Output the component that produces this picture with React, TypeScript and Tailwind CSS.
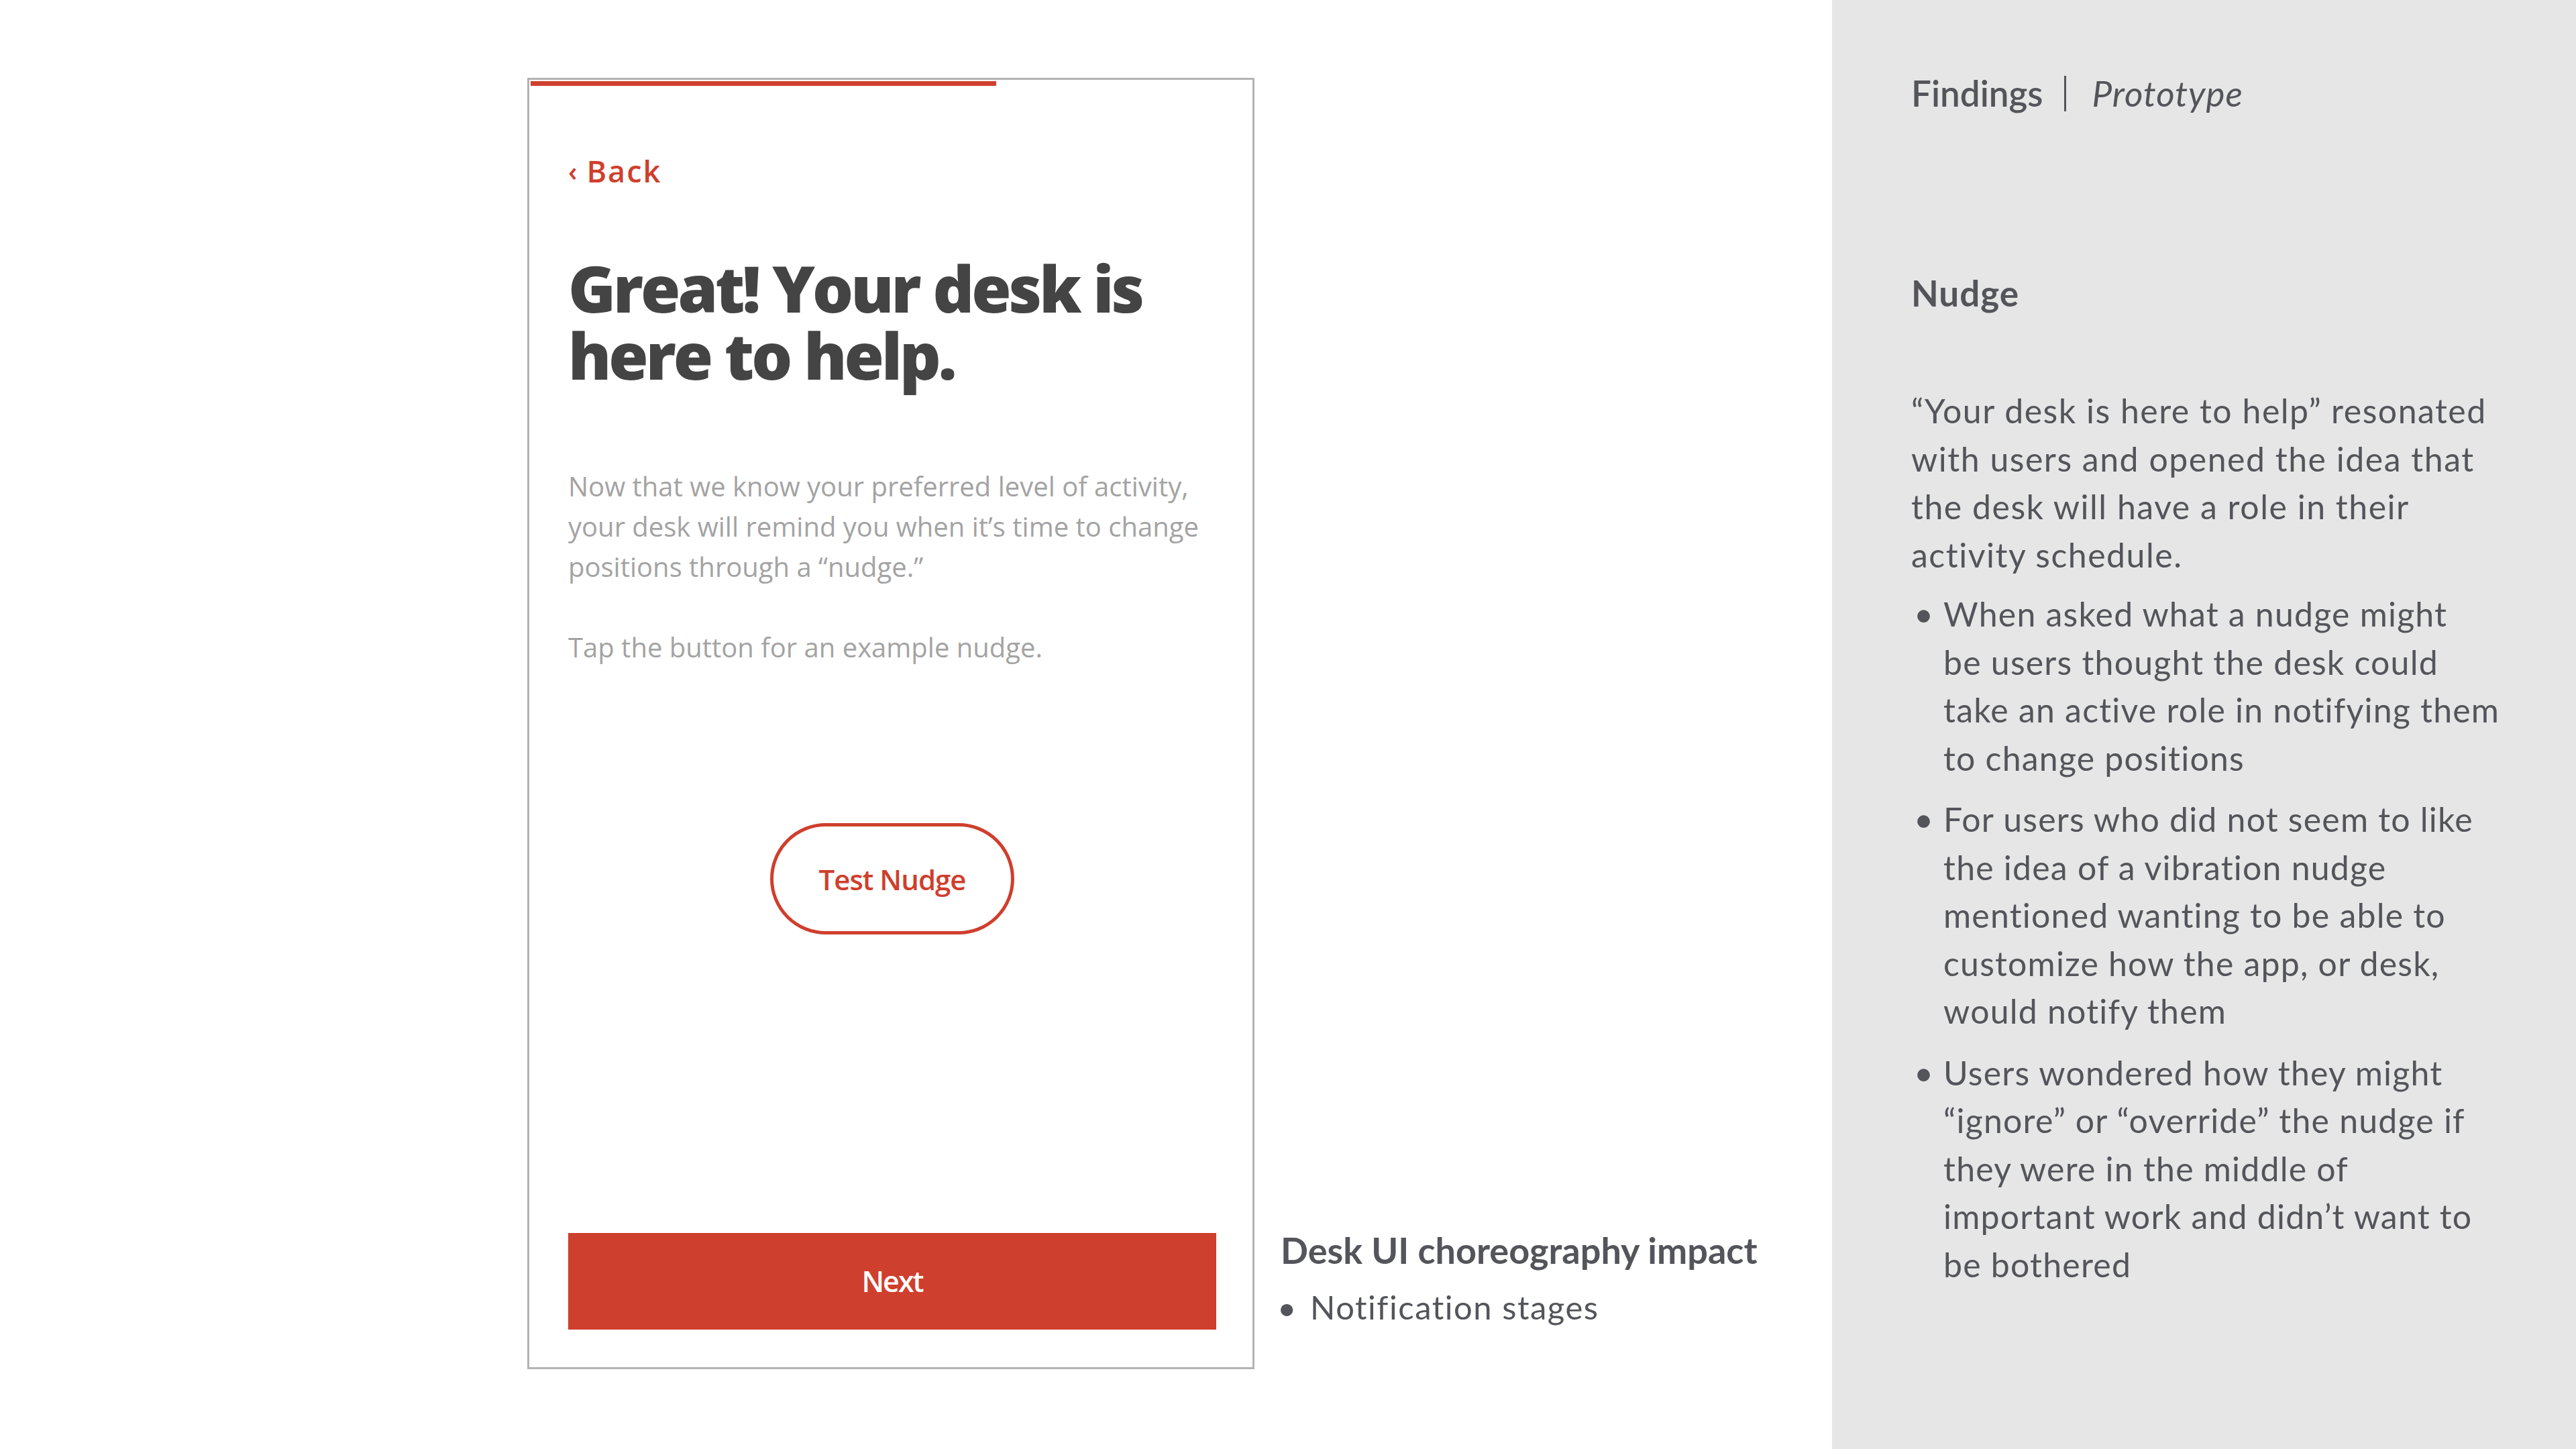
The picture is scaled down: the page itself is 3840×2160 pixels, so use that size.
import React from "react";

const phoneFont = { fontFamily: '"Open Sans", "Liberation Sans", sans-serif' };
const slideFont = { fontFamily: 'Lato, "Noto Sans", sans-serif' };

const nudgeNotes = [
  ["When asked what a nudge might", "be users thought the desk could", "take an active role in notifying them", "to change positions"],
  ["For users who did not seem to like", "the idea of a vibration nudge", "mentioned wanting to be able to", "customize how the app, or desk,", "would notify them"],
  ["Users wondered how they might", "\u201Cignore\u201D or \u201Coverride\u201D the nudge if", "they were in the middle of", "important work and didn\u2019t want to", "be bothered"],
];

function PhoneScreen() {
  return (
    <div
      className="flex h-[1925px] w-[1084px] flex-col border-[3px] border-[#b3b3b3] bg-white"
      style={phoneFont}
    >
      {/* progress bar */}
      <div className="ml-[2px] mt-[2px] h-[7px] w-[694px] bg-[#cf3f2d]" />

      <div className="flex flex-1 flex-col pl-[58px] pr-[54px] pb-[56px]">
        <div className="mt-[100px] flex items-center gap-[12px] text-[45px] font-semibold leading-[54px] tracking-[2px] text-[#cf3f2d]">
          <span className="text-[40px]">‹</span>
          <span>Back</span>
        </div>

        <h1 className="mt-[97px] whitespace-nowrap text-[96px] font-extrabold leading-[100px] tracking-[-4px] text-[#444444]">
          Great! Your desk is
          <br />
          here to help.
        </h1>

        <p className="mt-[116px] whitespace-nowrap text-[40px] font-medium leading-[60px] text-[#a3a3a3]">
          Now that we know your preferred level of activity,
          <br />
          your desk will remind you when it’s time to change
          <br />
          positions through a “nudge.”
        </p>
        <p className="mt-[60px] whitespace-nowrap text-[40px] font-medium leading-[60px] text-[#a3a3a3]">
          Tap the button for an example nudge.
        </p>

        <div className="mt-[232px] flex justify-center">
          <button className="flex h-[166px] w-[364px] items-center justify-center rounded-full border-[5px] border-[#cf3f2d] text-[42px] font-semibold tracking-[-1px] text-[#cf3f2d]">
            Test Nudge
          </button>
        </div>

        <button className="mt-auto flex h-[144px] w-full items-center justify-center bg-[#cf3f2d] text-[43px] font-semibold tracking-[-2px] text-white">
          Next
        </button>
      </div>
    </div>
  );
}

export default function App() {
  return (
    <div className="flex h-[2160px] w-[3840px] overflow-hidden bg-white text-[#53555a]" style={slideFont}>
      <div className="flex flex-1 items-start pl-[786px] pt-[116px]">
        <PhoneScreen />
        <div className="ml-[34px] mt-[1714px] flex flex-col">
          <div className="pl-[5px] text-[54px] font-bold leading-[68px]">Desk UI choreography impact</div>
          <div className="mt-[22px] flex text-[49px] leading-[56px] tracking-[1.5px]">
            <span className="w-[49px]">•</span>
            <span>Notification stages</span>
          </div>
        </div>
      </div>

      <aside className="flex w-[1109px] flex-col bg-[#e6e6e6] pl-[118px] pt-[107px] pr-[40px]">
        <div className="flex items-center text-[53px] leading-[64px]">
          <span className="font-semibold">Findings</span>
          <span className="ml-[32px] mr-[38px] h-[53px] w-[3px] bg-[#53555a]" />
          <span className="italic tracking-[1px]">Prototype</span>
        </div>

        <div className="mt-[234px] text-[53px] font-bold leading-[64px] tracking-[1px]">Nudge</div>

        <p className="mt-[108px] text-[50px] leading-[71.5px] tracking-[1.5px]">
          “Your desk is here to help” resonated
          <br />
          with users and opened the idea that
          <br />
          the desk will have a role in their
          <br />
          activity schedule.
        </p>

        <div className="flex flex-col gap-[20px] pt-[17px]">
          {nudgeNotes.map((lines, i) => (
            <div key={i} className="flex text-[50px] leading-[71.5px] tracking-[1.2px]">
              <span className="w-[48px] shrink-0 pl-[4px]">•</span>
              <span>
                {lines.map((line, j) => (
                  <span key={j} className="block">
                    {line}
                  </span>
                ))}
              </span>
            </div>
          ))}
        </div>
      </aside>
    </div>
  );
}
